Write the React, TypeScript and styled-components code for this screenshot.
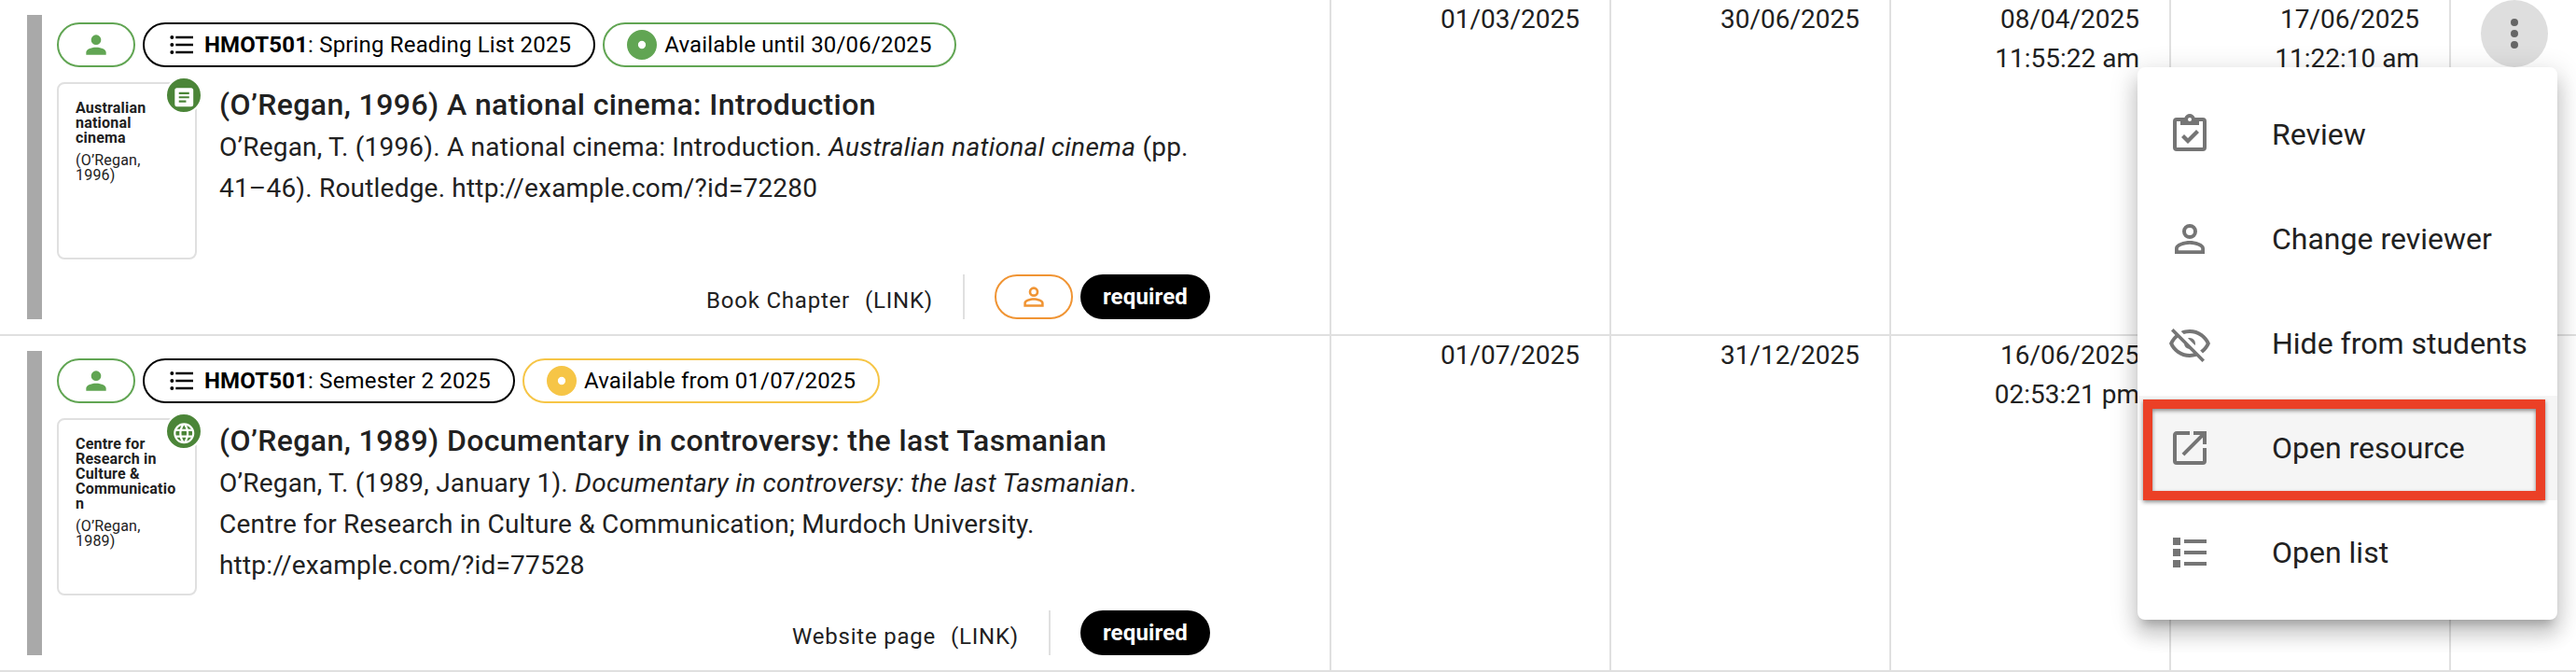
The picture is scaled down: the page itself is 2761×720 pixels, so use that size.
import React from "react";
import styled, { createGlobalStyle } from "styled-components";

const GlobalStyle = createGlobalStyle`
  *, *::before, *::after { box-sizing: border-box; }
  body {
    margin: 0;
    background: #fff;
    color: #212121;
    font-family: Roboto, "Liberation Sans", sans-serif;
    overflow: hidden;
  }
`;

const LINE = "#e0e0e0";
const GREEN = "#61a553";
const ORANGE = "#f09433";
const YELLOW = "#f6c546";

const paths = {
  account:
    "M12,4A4,4 0 0,1 16,8A4,4 0 0,1 12,12A4,4 0 0,1 8,8A4,4 0 0,1 12,4M12,14C16.42,14 20,15.79 20,18V20H4V18C4,15.79 7.58,14 12,14Z",
  accountOutline:
    "M12,4A4,4 0 0,1 16,8A4,4 0 0,1 12,12A4,4 0 0,1 8,8A4,4 0 0,1 12,4M12,6A2,2 0 0,0 10,8A2,2 0 0,0 12,10A2,2 0 0,0 14,8A2,2 0 0,0 12,6M12,13C14.67,13 20,14.33 20,17V20H4V17C4,14.33 9.33,13 12,13M12,14.9C9.03,14.9 5.9,16.36 5.9,17V18.1H18.1V17C18.1,16.36 14.97,14.9 12,14.9Z",
  list: "M7,5H21V7H7V5M7,13V11H21V13H7M4,4.5A1.5,1.5 0 0,1 5.5,6A1.5,1.5 0 0,1 4,7.5A1.5,1.5 0 0,1 2.5,6A1.5,1.5 0 0,1 4,4.5M4,10.5A1.5,1.5 0 0,1 5.5,12A1.5,1.5 0 0,1 4,13.5A1.5,1.5 0 0,1 2.5,12A1.5,1.5 0 0,1 4,10.5M7,19V17H21V19H7M4,16.5A1.5,1.5 0 0,1 5.5,18A1.5,1.5 0 0,1 4,19.5A1.5,1.5 0 0,1 2.5,18A1.5,1.5 0 0,1 4,16.5Z",
  status:
    "M12,0A12,12 0 0,1 24,12A12,12 0 0,1 12,24A12,12 0 0,1 0,12A12,12 0 0,1 12,0M12,8.9A3.1,3.1 0 0,0 8.9,12A3.1,3.1 0 0,0 12,15.1A3.1,3.1 0 0,0 15.1,12A3.1,3.1 0 0,0 12,8.9Z",
  textBox:
    "M14,17H7V15H14M17,13H7V11H17M17,9H7V7H17M19,3H5C3.89,3 3,3.89 3,5V19A2,2 0 0,0 5,21H19A2,2 0 0,0 21,19V5C21,3.89 20.1,3 19,3Z",
  web: "M16.36,14C16.44,13.34 16.5,12.68 16.5,12C16.5,11.32 16.44,10.66 16.36,10H19.74C19.9,10.64 20,11.31 20,12C20,12.69 19.9,13.36 19.74,14M14.59,19.56C15.19,18.45 15.65,17.25 15.97,16H18.92C17.96,17.65 16.43,18.93 14.59,19.56M14.34,14H9.66C9.56,13.34 9.5,12.68 9.5,12C9.5,11.32 9.56,10.65 9.66,10H14.34C14.43,10.65 14.5,11.32 14.5,12C14.5,12.68 14.43,13.34 14.34,14M12,19.96C11.17,18.76 10.5,17.43 10.09,16H13.91C13.5,17.43 12.83,18.76 12,19.96M8,8H5.08C6.03,6.34 7.57,5.06 9.4,4.44C8.8,5.55 8.35,6.75 8,8M5.08,16H8C8.35,17.25 8.8,18.45 9.4,19.56C7.57,18.93 6.03,17.65 5.08,16M4.26,14C4.1,13.36 4,12.69 4,12C4,11.31 4.1,10.64 4.26,10H7.64C7.56,10.66 7.5,11.32 7.5,12C7.5,12.68 7.56,13.34 7.64,14M12,4.03C12.83,5.23 13.5,6.57 13.91,8H10.09C10.5,6.57 11.17,5.23 12,4.03M18.92,8H15.97C15.65,6.75 15.19,5.55 14.59,4.44C16.43,5.07 17.96,6.34 18.92,8M12,2C6.47,2 2,6.5 2,12A10,10 0 0,0 12,22A10,10 0 0,0 22,12A10,10 0 0,0 12,2Z",
  dots: "M12,16A2,2 0 0,1 14,18A2,2 0 0,1 12,20A2,2 0 0,1 10,18A2,2 0 0,1 12,16M12,10A2,2 0 0,1 14,12A2,2 0 0,1 12,14A2,2 0 0,1 10,12A2,2 0 0,1 12,10M12,4A2,2 0 0,1 14,6A2,2 0 0,1 12,8A2,2 0 0,1 10,6A2,2 0 0,1 12,4Z",
  review:
    "M19,3H14.82C14.4,1.84 13.3,1 12,1C10.7,1 9.6,1.84 9.18,3H5A2,2 0 0,0 3,5V19A2,2 0 0,0 5,21H19A2,2 0 0,0 21,19V5A2,2 0 0,0 19,3M12,3A1,1 0 0,1 13,4A1,1 0 0,1 12,5A1,1 0 0,1 11,4A1,1 0 0,1 12,3M7,7H17V5H19V19H5V5H7V7M7.5,13.5L9,12L11,14L15.5,9.5L17,11L11,17L7.5,13.5Z",
  eyeOff:
    "M2,5.27L3.28,4L20,20.72L18.73,22L15.65,18.92C14.5,19.3 13.28,19.5 12,19.5C7,19.5 2.73,16.39 1,12C1.69,10.24 2.79,8.69 4.19,7.46L2,5.27M12,9A3,3 0 0,1 15,12C15,12.35 14.94,12.69 14.83,13L11,9.17C11.31,9.06 11.65,9 12,9M12,4.5C17,4.5 21.27,7.61 23,12C22.18,14.08 20.79,15.88 19,17.19L17.58,15.76C18.94,14.82 20.06,13.54 20.82,12C19.17,8.64 15.76,6.5 12,6.5C10.91,6.5 9.84,6.68 8.84,7L7.3,5.47C8.74,4.85 10.33,4.5 12,4.5M3.18,12C4.83,15.36 8.24,17.5 12,17.5C12.69,17.5 13.37,17.43 14,17.29L11.72,15C10.29,14.85 9.15,13.71 9,12.28L5.6,8.87C4.61,9.72 3.78,10.78 3.18,12Z",
  openNew:
    "M14,3V5H17.59L7.76,14.83L9.17,16.24L19,6.41V10H21V3M19,19H5V5H12V3H5C3.89,3 3,3.9 3,5V19A2,2 0 0,0 5,21H19A2,2 0 0,0 21,19V12H19V19Z",
  squareList:
    "M3,4H7V8H3V4M9,5V7H21V5H9M3,10H7V14H3V10M9,11V13H21V11H9M3,16H7V20H3V16M9,17V19H21V17H9",
};

type IconName = keyof typeof paths;

const Svg = styled.svg<{ $color: string }>`
  display: block;
  flex: none;
  fill: ${(p) => p.$color};
`;

function Icon({ name, size, color }: { name: IconName; size: number; color: string }) {
  return (
    <Svg viewBox="0 0 24 24" width={size} height={size} $color={color}>
      <path d={paths[name]} />
    </Svg>
  );
}

const Table = styled.main`
  width: 2761px;
  height: 720px;
  overflow: hidden;
`;

const Row = styled.section`
  display: grid;
  grid-template-columns: 1427px repeat(4, 300px) 134px;
  height: 360px;
  border-bottom: 2px solid ${LINE};
`;

const ItemCell = styled.div`
  display: flex;
  gap: 16px;
  padding: 16px 128px 16px 29px;
  border-right: 2px solid ${LINE};
`;

const Handle = styled.div`
  flex: none;
  width: 16px;
  background: #a9a9a9;
`;

const Item = styled.article`
  flex: 1;
  min-width: 0;
  display: flex;
  flex-direction: column;
  padding-top: 8px;
`;

const Chips = styled.div`
  display: flex;
  gap: 8px;
`;

const Chip = styled.span<{ $color: string }>`
  display: inline-flex;
  align-items: center;
  gap: 8px;
  height: 48px;
  padding: 0 24px;
  border: 2px solid ${(p) => p.$color};
  border-radius: 24px;
  color: #000;
  font-size: 24px;
  letter-spacing: 0.17px;
  white-space: nowrap;
`;

const Importance = styled.span`
  display: inline-flex;
  align-items: center;
  height: 48px;
  padding: 0 24px;
  border-radius: 24px;
  background: #000;
  color: #fff;
  font-size: 24px;
  font-weight: 700;
  letter-spacing: 0.15px;
`;

const Body = styled.div`
  display: flex;
  gap: 24px;
  margin-top: 16px;
`;

const Thumb = styled.div`
  position: relative;
  flex: none;
  width: 150px;
  height: 190px;
  padding: 18px;
  border: 2px solid ${LINE};
  border-radius: 8px;
  font-size: 16px;
  line-height: 16px;
  letter-spacing: 0.2px;
  word-break: break-word;
`;

const ThumbTitle = styled.div`
  margin-bottom: 8px;
  font-weight: 700;
`;

const TypeBadge = styled.div`
  position: absolute;
  top: -8px;
  right: -8px;
  display: flex;
  justify-content: center;
  width: 40px;
  height: 40px;
  padding-top: 7px;
  border: 2px solid #fff;
  border-radius: 50%;
  background: #4b8538;
`;

const Reference = styled.div`
  flex: 1;
  min-width: 0;
`;

const Title = styled.h2`
  margin: 0;
  font-size: 32px;
  font-weight: 500;
  line-height: 48px;
  letter-spacing: 0.4px;
`;

const Citation = styled.p`
  margin: 0;
  font-size: 28px;
  line-height: 44px;
  letter-spacing: 0.2px;
  white-space: nowrap;

  em {
    letter-spacing: 0.29px;
  }
`;

const Footer = styled.footer`
  display: flex;
  align-items: stretch;
  justify-content: flex-end;
  height: 48px;
  margin-top: auto;
`;

const Kind = styled.div`
  display: flex;
  gap: 16px;
  padding: 7px 32px 0 0;
  font-size: 24px;
  line-height: 42px;
  letter-spacing: 0.78px;
`;

const Flags = styled.div`
  display: flex;
  gap: 8px;
  padding-left: 32px;
  border-left: 2px solid ${LINE};
`;

const DateCell = styled.div`
  padding: 0 32px;
  border-right: 2px solid ${LINE};
  font-size: 28px;
  line-height: 42px;
  text-align: right;
`;

const ActionCell = styled.div`
  padding-left: 32px;
`;

const MenuAnchor = styled.div`
  position: relative;
  width: 72px;
`;

const MoreButton = styled.button`
  display: flex;
  align-items: center;
  justify-content: center;
  width: 72px;
  height: 72px;
  padding: 0;
  border: 0;
  border-radius: 50%;
  background: #dedede;
`;

const Menu = styled.ul`
  position: absolute;
  z-index: 2;
  top: 72px;
  right: -10px;
  width: 450px;
  margin: 0;
  padding: 16px 0;
  border-radius: 8px;
  background: #fff;
  box-shadow:
    0 10px 10px -6px rgba(0, 0, 0, 0.2),
    0 16px 20px 2px rgba(0, 0, 0, 0.14),
    0 6px 28px 4px rgba(0, 0, 0, 0.12);
  list-style: none;
`;

const MenuItem = styled.li<{ $active?: boolean }>`
  position: relative;
  display: flex;
  align-items: center;
  gap: 64px;
  height: 112px;
  padding: 0 32px;
  background: ${(p) => (p.$active ? "#f5f5f5" : "transparent")};
  font-size: 32px;
  white-space: nowrap;
`;

const Highlight = styled.span`
  position: absolute;
  top: 4px;
  left: 6px;
  width: 431px;
  height: 108px;
  border: 10px solid #eb4026;
  filter: drop-shadow(0 2px 2px rgba(0, 0, 0, 0.45));
`;

interface Entry {
  list: string;
  availability: string;
  availabilityColor: string;
  source: string;
  author: string;
  badge: IconName;
  title: string;
  citation: React.ReactNode;
  kind: string;
  hasReviewer: boolean;
  dates: string[][];
}

const entries: Entry[] = [
  {
    list: "Spring Reading List 2025",
    availability: "Available until 30/06/2025",
    availabilityColor: GREEN,
    source: "Australian national cinema",
    author: "(O’Regan, 1996)",
    badge: "textBox",
    title: "(O’Regan, 1996) A national cinema: Introduction",
    citation: (
      <>
        O’Regan, T. (1996). A national cinema: Introduction. <em>Australian national cinema</em> (pp.
        <br />
        41–46). Routledge. http://example.com/?id=72280
      </>
    ),
    kind: "Book Chapter",
    hasReviewer: true,
    dates: [["01/03/2025"], ["30/06/2025"], ["08/04/2025", "11:55:22 am"], ["17/06/2025", "11:22:10 am"]],
  },
  {
    list: "Semester 2 2025",
    availability: "Available from 01/07/2025",
    availabilityColor: YELLOW,
    source: "Centre for Research in Culture & Communication",
    author: "(O’Regan, 1989)",
    badge: "web",
    title: "(O’Regan, 1989) Documentary in controversy: the last Tasmanian",
    citation: (
      <>
        O’Regan, T. (1989, January 1). <em>Documentary in controversy: the last Tasmanian</em>.
        <br />
        Centre for Research in Culture &amp; Communication; Murdoch University.
        <br />
        http://example.com/?id=77528
      </>
    ),
    kind: "Website page",
    hasReviewer: false,
    dates: [["01/07/2025"], ["31/12/2025"], ["16/06/2025", "02:53:21 pm"], []],
  },
];

const menuItems: { icon: IconName; label: string; active?: boolean }[] = [
  { icon: "review", label: "Review" },
  { icon: "accountOutline", label: "Change reviewer" },
  { icon: "eyeOff", label: "Hide from students" },
  { icon: "openNew", label: "Open resource", active: true },
  { icon: "squareList", label: "Open list" },
];

function ActionMenu() {
  return (
    <MenuAnchor>
      <MoreButton aria-label="More actions">
        <Icon name="dots" size={48} color="#666" />
      </MoreButton>
      <Menu>
        {menuItems.map((m) => (
          <MenuItem key={m.label} $active={m.active}>
            <Icon name={m.icon} size={48} color="#757575" />
            {m.label}
            {m.active && <Highlight />}
          </MenuItem>
        ))}
      </Menu>
    </MenuAnchor>
  );
}

function EntryRow({ entry, children }: { entry: Entry; children?: React.ReactNode }) {
  return (
    <Row>
      <ItemCell>
        <Handle />
        <Item>
          <Chips>
            <Chip $color={GREEN}>
              <Icon name="account" size={32} color={GREEN} />
            </Chip>
            <Chip $color="#000">
              <Icon name="list" size={32} color="#000" />
              <span>
                <b>HMOT501</b>: {entry.list}
              </span>
            </Chip>
            <Chip $color={entry.availabilityColor}>
              <Icon name="status" size={32} color={entry.availabilityColor} />
              {entry.availability}
            </Chip>
          </Chips>
          <Body>
            <Thumb>
              <ThumbTitle>{entry.source}</ThumbTitle>
              {entry.author}
              <TypeBadge>
                <Icon name={entry.badge} size={26.5} color="#fff" />
              </TypeBadge>
            </Thumb>
            <Reference>
              <Title>{entry.title}</Title>
              <Citation>{entry.citation}</Citation>
            </Reference>
          </Body>
          <Footer>
            <Kind>
              <span>{entry.kind}</span>
              <span>(LINK)</span>
            </Kind>
            <Flags>
              {entry.hasReviewer && (
                <Chip $color={ORANGE}>
                  <Icon name="accountOutline" size={32} color={ORANGE} />
                </Chip>
              )}
              <Importance>required</Importance>
            </Flags>
          </Footer>
        </Item>
      </ItemCell>
      {entry.dates.map((lines, i) => (
        <DateCell key={i}>
          {lines.map((line) => (
            <div key={line}>{line}</div>
          ))}
        </DateCell>
      ))}
      <ActionCell>{children}</ActionCell>
    </Row>
  );
}

export default function App() {
  return (
    <>
      <GlobalStyle />
      <Table>
        <EntryRow entry={entries[0]}>
          <ActionMenu />
        </EntryRow>
        <EntryRow entry={entries[1]} />
      </Table>
    </>
  );
}
